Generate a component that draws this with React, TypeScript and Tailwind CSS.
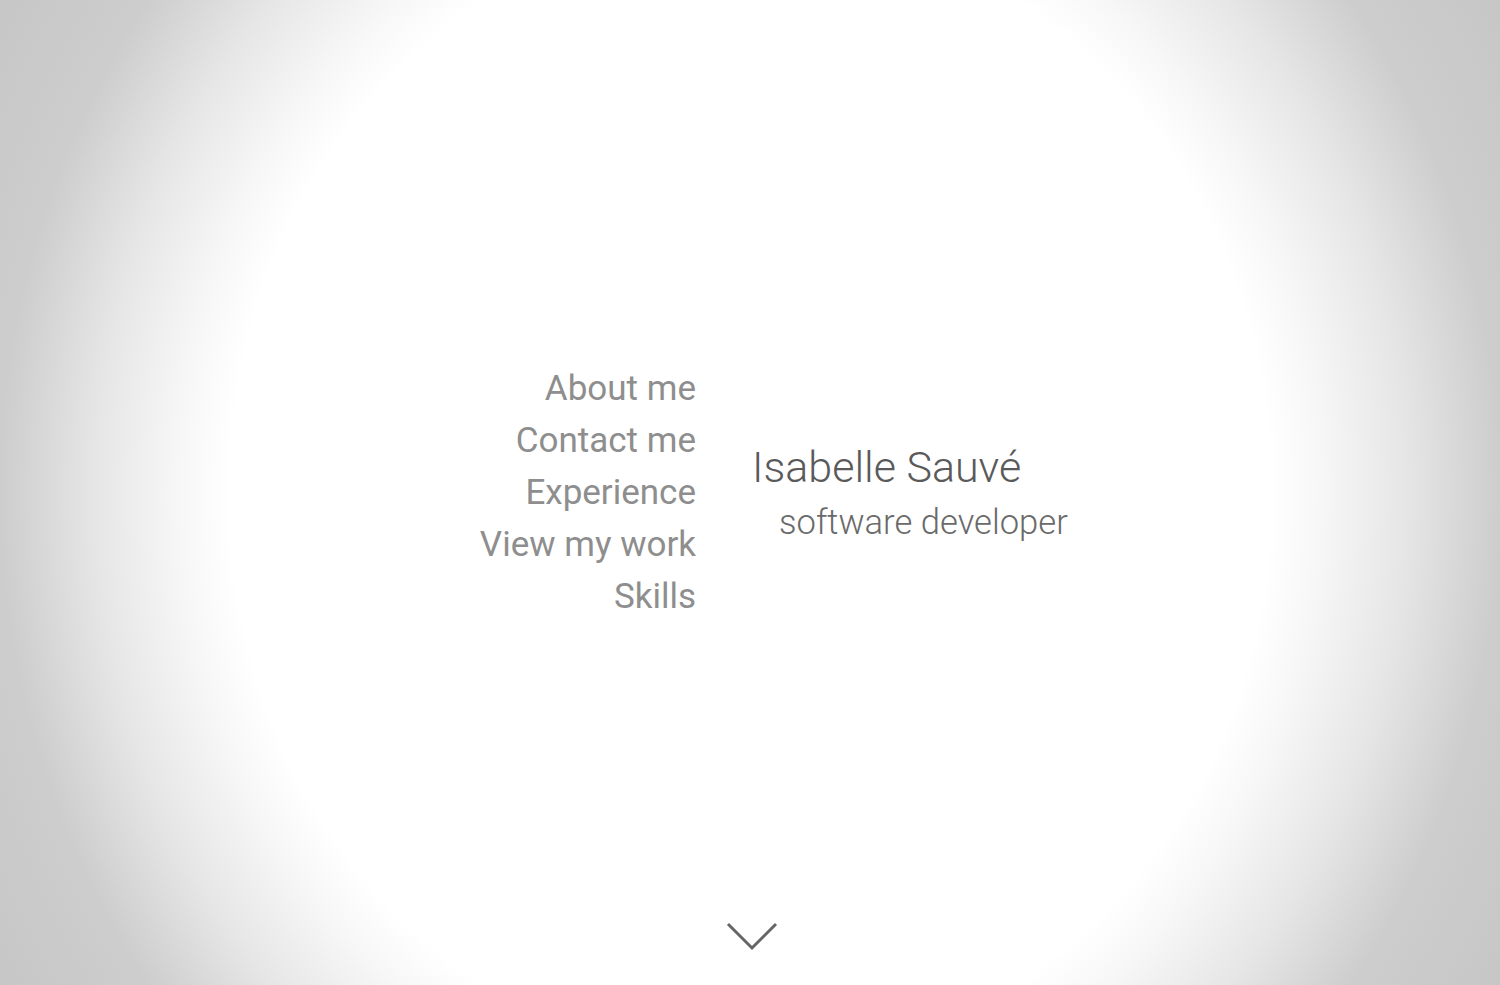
export default function App() {
  const links = ['About me', 'Contact me', 'Experience', 'View my work', 'Skills'];
  return (
    <div
      className="relative flex h-[985px] w-full items-center overflow-hidden font-['Roboto',sans-serif] bg-[radial-gradient(ellipse_1000px_1100px_at_center,#ffffff_520px,#f7f7f7_570px,#e6e6e6_655px,#cdcdcd_750px,#c5c5c5_900px)]"
    >
      <div className="grid w-full grid-cols-2 items-center">
        <nav className="flex flex-col items-end pr-[54px]">
          {links.map((l) => (
            <a key={l} className="text-[35px] leading-[52px] text-[#8e8e8e]">
              {l}
            </a>
          ))}
        </nav>
        <div className="flex flex-col pl-[2px] pt-[3px]">
          <h1 className="text-[43px] font-light leading-[52px] text-[#5a5a5a]">Isabelle Sauvé</h1>
          <p className="mt-[3px] pl-[27px] text-[34.6px] font-light leading-[52px] text-[#6a6a6a]">software developer</p>
        </div>
      </div>
      <svg
        className="absolute bottom-[33px] left-1/2 ml-[2px] -translate-x-1/2"
        width="52"
        height="30"
        viewBox="0 0 52 30"
        fill="none"
        stroke="#666666"
        strokeWidth="3"
      >
        <path d="M2 2 L26 26 L50 2" />
      </svg>
    </div>
  );
}
